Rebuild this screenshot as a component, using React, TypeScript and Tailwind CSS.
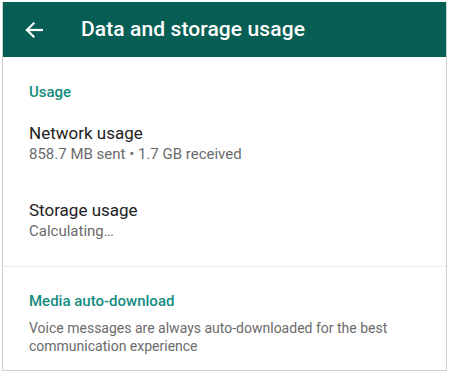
import React from 'react';

const Row: React.FC<{ title: string; sub: string }> = ({ title, sub }) => (
  <div className="flex flex-col">
    <span className="text-[17px] leading-[22px] text-[#222]">{title}</span>
    <span className="text-[15px] leading-[20px] text-[#6b6b6b]">{sub}</span>
  </div>
);

const App: React.FC = () => {
  return (
    <div className="w-[450px] h-[374px] bg-white p-[2px]" style={{ fontFamily: 'Roboto, "Noto Sans", sans-serif' }}>
      <div className="w-[445px] h-[369px] border-r border-b border-l border-[#cfcfcf] flex flex-col overflow-hidden">
        {/* Toolbar */}
        <header className="h-[55px] bg-[#075e54] flex items-center shrink-0">
          <svg width="18" height="16" viewBox="0 0 18 16" className="ml-[22px]" fill="none" stroke="white" strokeWidth="2.2" strokeLinecap="square">
            <path d="M17 8H2" />
            <path d="M8.5 1.5L2 8l6.5 6.5" />
          </svg>
          <h1 className="ml-[38px] text-white text-[21px] font-medium tracking-[0.1px]">Data and storage usage</h1>
        </header>

        {/* Usage section */}
        <section className="px-[26px] pt-[25px] pb-[25px] border-b border-[#ececec]">
          <h2 className="text-[15px] font-medium text-[#128c7e] leading-[20px]">Usage</h2>
          <div className="mt-[20px]">
            <Row title="Network usage" sub="858.7 MB sent • 1.7 GB received" />
          </div>
          <div className="mt-[35px]">
            <Row title="Storage usage" sub="Calculating…" />
          </div>
        </section>

        {/* Media auto-download */}
        <section className="px-[26px] pt-[24px]">
          <h2 className="text-[15px] font-medium text-[#128c7e] leading-[20px]">Media auto-download</h2>
          <p className="mt-[8px] text-[14px] leading-[18px] text-[#6b6b6b] w-[385px]">
            Voice messages are always auto-downloaded for the best communication experience
          </p>
        </section>
      </div>
    </div>
  );
};

export default App;
